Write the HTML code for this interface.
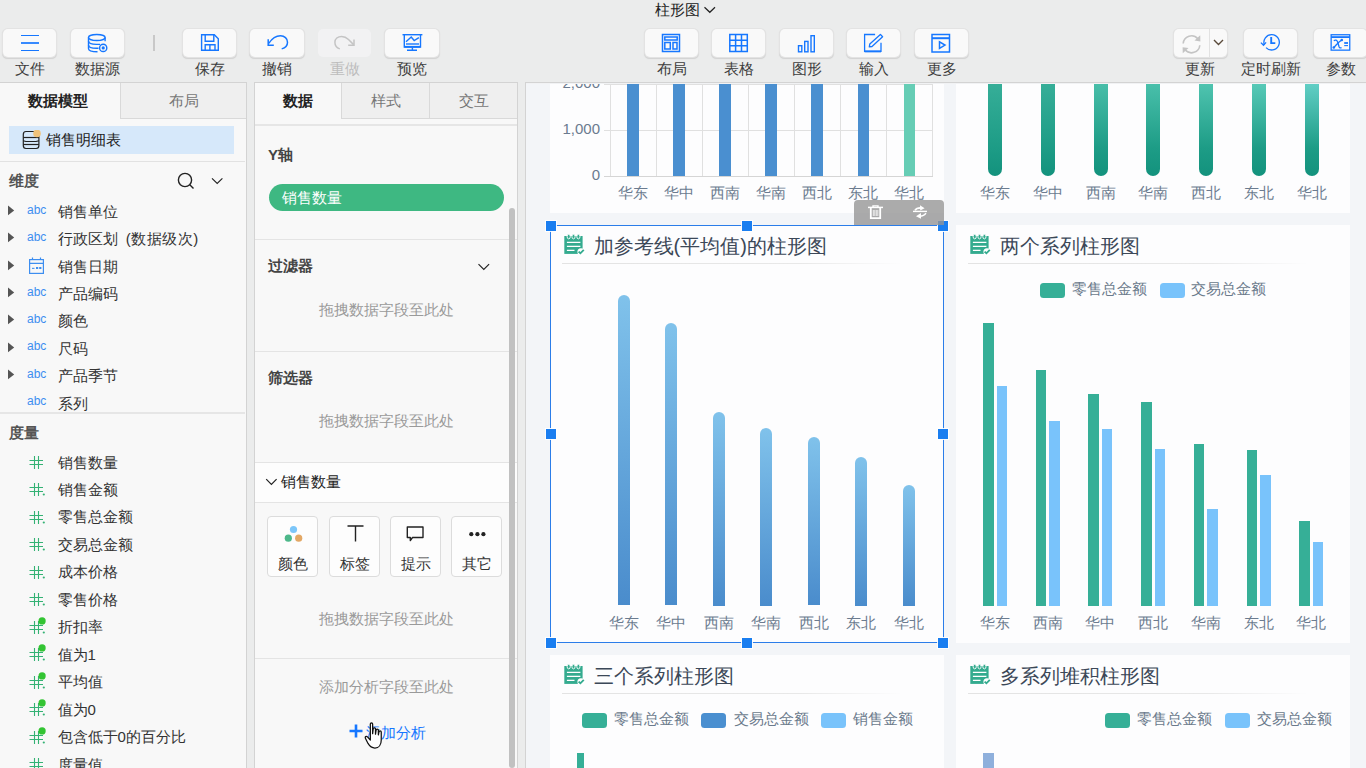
<!DOCTYPE html>
<html><head><meta charset="utf-8">
<style>
*{box-sizing:border-box;margin:0;padding:0}
html,body{width:1366px;height:768px;overflow:hidden;background:#ebecec;font-family:"Liberation Sans",sans-serif;color:#333;position:relative}
.a{position:absolute}
.t{position:absolute;white-space:nowrap;line-height:1}
.btn{position:absolute;top:29px;width:53px;height:27.5px;background:#f9f9f9;border-radius:5px;box-shadow:0 0 0 1px #e3e3e3,0 1px 1px 0.5px #d2d2d2}
.btn svg{position:absolute;left:0;top:0}
.lbl{position:absolute;top:60.5px;font-size:15px;line-height:16px;color:#3d3d3d;text-align:center;width:80px;white-space:nowrap}
</style></head><body>
<div class="t" style="left:654.5px;top:1.5px;font-size:15px;line-height:16px;color:#222">柱形图</div>
<svg class="a" style="left:703px;top:4px" width="14" height="10"><path d="M1.5 3.2 L6.8 8.3 L12 3.2" fill="none" stroke="#222" stroke-width="1.2"/></svg>
<div class="btn" style="left:3px;width:53px;background:#f9f9f9;"><svg style="position:absolute;left:0px;top:0px" width="53" height="28" viewBox="0 0 53 28"><g stroke="#1677ff"><path d="M18 6.5H36M18 21.5H36" stroke-width="1.1"/><path d="M18 14H36" stroke-width="1.7"/></g></svg></div>
<div class="lbl" style="left:-10.5px;color:#3d3d3d">文件</div>
<div class="btn" style="left:71px;width:53px;background:#f9f9f9;"><svg style="position:absolute;left:0px;top:0px" width="53" height="28" viewBox="0 0 53 28"><g fill="none" stroke="#1677ff" stroke-width="1.4"><ellipse cx="25.8" cy="8.5" rx="8.3" ry="3"/><path d="M17.5 8.5V19.5C17.5 21.5 21.5 22.8 26.5 22.8"/><path d="M34.1 8.5V12.3"/><path d="M17.5 12C17.5 14.5 21.5 15.4 25.5 15.4H29"/><path d="M17.5 16C17.5 18.5 21.5 19.3 25.5 19.3H27.5"/><circle cx="32.2" cy="18.9" r="3.6"/></g><circle cx="32.2" cy="18.9" r="1.6" fill="#1677ff"/></svg></div>
<div class="lbl" style="left:57.5px;color:#3d3d3d">数据源</div>
<div class="a" style="left:153px;top:35px;width:2px;height:16px;background:#c8c8c8"></div>
<div class="btn" style="left:183px;width:53px;background:#f9f9f9;"><svg style="position:absolute;left:0px;top:0px" width="53" height="28" viewBox="0 0 53 28"><g fill="none" stroke="#1677ff" stroke-width="1.4"><path d="M18.6 5.7H31.3L35.3 9.7V21.3H18.6Z"/><path d="M22.2 5.7V12.3H30.8V5.7"/><path d="M22.2 21.3V15.8H32V21.3M26.9 15.8V21.3"/></g></svg></div>
<div class="lbl" style="left:169.5px;color:#3d3d3d">保存</div>
<div class="btn" style="left:250px;width:54px;background:#f9f9f9;"><svg style="position:absolute;left:0px;top:0px" width="54" height="28" viewBox="0 0 54 28"><g fill="none" stroke="#1677ff" stroke-width="1.5"><path d="M18.8 14.4C22 9.5 26 6.8 30.5 6.8C34.5 6.8 37.5 9.5 37.5 13.2C37.5 16.5 35 19 31.7 19.9"/><path d="M18.2 10.3V16.2H23.8"/></g></svg></div>
<div class="lbl" style="left:237.0px;color:#3d3d3d">撤销</div>
<div class="btn" style="left:318px;width:53px;background:#f2f2f3;box-shadow:none;"><svg style="position:absolute;left:0px;top:0px" width="53" height="28" viewBox="0 0 53 28"><g fill="none" stroke="#c4c4c4" stroke-width="1.5"><path d="M21.8 19.9C18.5 18.7 16.9 16 16.9 13.2C16.9 9.8 19.8 7.4 23.6 7.4C26.5 7.4 28.5 8.5 30.5 10.5L35.6 15.6"/><path d="M36 10.5V16.2H30.2"/></g></svg></div>
<div class="lbl" style="left:304.5px;color:#bdbdbd">重做</div>
<div class="btn" style="left:385px;width:54px;background:#f9f9f9;"><svg style="position:absolute;left:0px;top:0px" width="54" height="28" viewBox="0 0 54 28"><g fill="none" stroke="#1677ff" stroke-width="1.4"><path d="M17.5 5.7H37.4"/><path d="M19.3 5.7V18H35.5V5.7"/><path d="M19.3 17.8H35.5" stroke-width="1.8"/><path d="M21 12.7L26.2 8L29.2 11.5L33.9 8.6"/><path d="M21 15H34"/><path d="M27.4 18.5V21.2M22 21.2H32"/></g></svg></div>
<div class="lbl" style="left:372.0px;color:#3d3d3d">预览</div>
<div class="btn" style="left:645px;width:53px;background:#f9f9f9;"><svg style="position:absolute;left:0px;top:0px" width="53" height="28" viewBox="0 0 53 28"><g fill="none" stroke="#1677ff" stroke-width="1.5"><rect x="17.5" y="5.5" width="17" height="17"/><rect x="19.8" y="8" width="12.4" height="3"/><rect x="19.8" y="13.5" width="5.5" height="6.5"/><rect x="28" y="13.5" width="4" height="6.5"/></g></svg></div>
<div class="lbl" style="left:631.5px;color:#3d3d3d">布局</div>
<div class="btn" style="left:712px;width:53px;background:#f9f9f9;"><svg style="position:absolute;left:0px;top:0px" width="53" height="28" viewBox="0 0 53 28"><g fill="none" stroke="#1677ff" stroke-width="1.5"><rect x="17.8" y="5.5" width="17.5" height="17"/><path d="M23.6 5.5V22.5M29.5 5.5V22.5M17.8 11.2H35.3M17.8 16.8H35.3"/></g></svg></div>
<div class="lbl" style="left:698.5px;color:#3d3d3d">表格</div>
<div class="btn" style="left:780px;width:53px;background:#f9f9f9;"><svg style="position:absolute;left:0px;top:0px" width="53" height="28" viewBox="0 0 53 28"><g fill="none" stroke="#1677ff" stroke-width="1.4"><rect x="18.5" y="16.7" width="3.3" height="6.1"/><rect x="24.7" y="12.4" width="3.3" height="10.4"/><rect x="31" y="6.7" width="3.3" height="16.1"/></g></svg></div>
<div class="lbl" style="left:766.5px;color:#3d3d3d">图形</div>
<div class="btn" style="left:847px;width:53px;background:#f9f9f9;"><svg style="position:absolute;left:0px;top:0px" width="53" height="28" viewBox="0 0 53 28"><g fill="none" stroke="#1677ff" stroke-width="1.3"><path d="M28.1 5.5H17.6V22.3H34V13.7"/><path d="M17.6 22.4H34" stroke-width="1.9"/><path d="M22.3 17.9L22.8 15.1L33.4 5.4L35.6 7.8L25 17.5Z" stroke-linejoin="round"/></g></svg></div>
<div class="lbl" style="left:833.5px;color:#3d3d3d">输入</div>
<div class="btn" style="left:915px;width:53px;background:#f9f9f9;"><svg style="position:absolute;left:0px;top:0px" width="53" height="28" viewBox="0 0 53 28"><g fill="none" stroke="#1677ff" stroke-width="1.5"><rect x="17" y="5.5" width="17.5" height="17.5"/><path d="M17 9.2H34.5" stroke-width="2"/><path d="M24.5 12.8V19.5L30 16.1Z"/></g></svg></div>
<div class="lbl" style="left:901.5px;color:#3d3d3d">更多</div>
<div class="btn" style="left:1174px;width:53px"><svg style="position:absolute;left:0px;top:0px" width="36" height="28" viewBox="0 0 36 28"><g fill="none" stroke="#c4c4c4" stroke-width="1.6"><path d="M9.2 14.5A8.3 8.3 0 0 1 23.8 9.8"/><path d="M25.8 16.2A8.3 8.3 0 0 1 11.2 20.8"/></g><path d="M26.2 6.3L26.4 12.4L20.5 11.6Z" fill="#c4c4c4"/><path d="M8.8 24.3L8.6 18.2L14.5 19Z" fill="#c4c4c4"/></svg><div class="a" style="left:35px;top:0;width:1px;height:28px;background:#e2e2e2"></div><svg style="position:absolute;left:36px;top:0px" width="18" height="28" viewBox="0 0 18 28"><path d="M4 11L8.5 15.5L13 11" fill="none" stroke="#5a4a3a" stroke-width="1.4"/></svg></div>
<div class="lbl" style="left:1160px">更新</div>
<div class="btn" style="left:1244px;width:53px;background:#f9f9f9;"><svg style="position:absolute;left:0px;top:0px" width="53" height="28" viewBox="0 0 53 28"><g fill="none" stroke="#1677ff" stroke-width="1.3"><path d="M20.36 15.93A7.7 7.7 0 1 1 22.06 18.65"/><path d="M16.9 13.6L19.5 16.2L22.1 13.4"/><path d="M27.2 8V14.1H31.3" stroke-width="1.9"/></g></svg></div>
<div class="lbl" style="left:1230.5px;color:#3d3d3d">定时刷新</div>
<div class="btn" style="left:1314px;width:53px;background:#f9f9f9;"><svg style="position:absolute;left:0px;top:0px" width="53" height="28" viewBox="0 0 53 28"><g fill="none" stroke="#1677ff" stroke-width="1.3"><rect x="17.15" y="5.75" width="18.6" height="15.4"/></g><rect x="17.15" y="7.2" width="18.6" height="1.8" fill="#1677ff"/><g fill="none" stroke="#1677ff" stroke-width="1.3"><path d="M19.8 11.8C21.5 10.5 23 11 23.8 13.5L25 17.5C25.5 19 26.5 19.3 27.5 18.5"/><path d="M19.5 18.7C22 16.5 24.5 12.5 28 10.8"/><path d="M30.2 14H34" stroke-width="1.8"/><path d="M30.2 16.6H34" stroke-width="1.1"/></g><circle cx="27.8" cy="11" r="1.3" fill="#1677ff"/><circle cx="19.8" cy="18.5" r="1.3" fill="#1677ff"/></svg></div>
<div class="lbl" style="left:1300.5px;color:#3d3d3d">参数</div>
<div class="a" style="left:0px;top:83px;width:246px;height:685px;background:#f8f8f8;"></div>
<div class="a" style="left:246px;top:82px;width:1px;height:686px;background:#d3d3d3;"></div>
<div class="a" style="left:120px;top:83px;width:126px;height:36px;background:#efefef;border-left:1px solid #d9d9d9;border-bottom:1px solid #d9d9d9"></div>
<div class="t" style="left:28px;top:92.5px;font-size:15px;line-height:16px;color:#222;font-weight:bold;">数据模型</div>
<div class="t" style="left:169px;top:93px;font-size:15px;line-height:16px;color:#777;font-weight:normal;">布局</div>
<div class="a" style="left:9px;top:126px;width:225px;height:28px;background:#d6e8fa;"></div>
<svg style="position:absolute;left:21px;top:130px" width="22" height="22" viewBox="0 0 22 22"><g fill="none" stroke="#222" stroke-width="1.2"><path d="M15 1.5H5C3 1.5 2.3 2.6 2.3 4.4V15.6C2.3 17.6 3.2 18.5 5 18.5H15.2C17 18.5 17.9 17.6 17.9 15.6V6"/><path d="M2.3 7.5H17.9"/><path d="M2.3 10.9C3.5 10.9 4.5 11.5 5.5 11.5H14.5C15.5 11.5 16.5 10.9 17.9 10.9"/><path d="M2.3 14.5H17.9"/></g><circle cx="16" cy="3.4" r="3.8" fill="#f0c27a"/></svg>
<div class="t" style="left:46px;top:132px;font-size:15px;line-height:16px;color:#222;font-weight:normal;">销售明细表</div>
<div class="a" style="left:0px;top:161px;width:245px;height:1px;background:#e2e2e2;"></div>
<div class="t" style="left:9px;top:173px;font-size:15px;line-height:16px;color:#555;font-weight:bold;">维度</div>
<svg style="position:absolute;left:177px;top:172px" width="20" height="20" viewBox="0 0 20 20"><g fill="none" stroke="#222" stroke-width="1.4"><circle cx="8" cy="8" r="6.6"/><path d="M12.8 12.8L16.5 16.5"/></g></svg>
<svg style="position:absolute;left:210px;top:176px" width="14" height="10" viewBox="0 0 14 10"><path d="M2 2.4L7.2 7.4L12.4 2.4" fill="none" stroke="#222" stroke-width="1.15"/></svg>
<svg style="position:absolute;left:7px;top:205px" width="9" height="12" viewBox="0 0 9 12"><path d="M1 0.5L7.2 5.4L1 10.3Z" fill="#555"/></svg>
<div class="t" style="left:27px;top:201.5px;font-size:12px;line-height:16px;color:#3d8ef0">abc</div>
<div class="t" style="left:57.5px;top:204.0px;font-size:15px;line-height:16px;color:#333;font-weight:normal;">销售单位</div>
<svg style="position:absolute;left:7px;top:232px" width="9" height="12" viewBox="0 0 9 12"><path d="M1 0.5L7.2 5.4L1 10.3Z" fill="#555"/></svg>
<div class="t" style="left:27px;top:228.5px;font-size:12px;line-height:16px;color:#3d8ef0">abc</div>
<div class="t" style="left:57.5px;top:231.0px;font-size:15px;line-height:16px;color:#333;font-weight:normal;">行政区划&nbsp;<span style="margin-left:4px;letter-spacing:0.5px">(数据级次)</span></div>
<svg style="position:absolute;left:7px;top:259.5px" width="9" height="12" viewBox="0 0 9 12"><path d="M1 0.5L7.2 5.4L1 10.3Z" fill="#555"/></svg>
<svg style="position:absolute;left:25.5px;top:257.0px" width="20" height="20" viewBox="0 0 20 20"><g fill="none" stroke="#3d8ef0" stroke-width="1.2"><rect x="3.6" y="2.6" width="13.8" height="13.8"/><path d="M3.6 6.3H17.4M6.5 0.5V3M14.5 0.5V3"/></g><g fill="#3d8ef0"><rect x="6" y="10.8" width="2.5" height="1.1"/><rect x="10" y="10" width="2.2" height="2"/><rect x="13.2" y="10" width="2.2" height="2"/></g></svg>
<div class="t" style="left:57.5px;top:258.5px;font-size:15px;line-height:16px;color:#333;font-weight:normal;">销售日期</div>
<svg style="position:absolute;left:7px;top:287px" width="9" height="12" viewBox="0 0 9 12"><path d="M1 0.5L7.2 5.4L1 10.3Z" fill="#555"/></svg>
<div class="t" style="left:27px;top:283.5px;font-size:12px;line-height:16px;color:#3d8ef0">abc</div>
<div class="t" style="left:57.5px;top:286.0px;font-size:15px;line-height:16px;color:#333;font-weight:normal;">产品编码</div>
<svg style="position:absolute;left:7px;top:314px" width="9" height="12" viewBox="0 0 9 12"><path d="M1 0.5L7.2 5.4L1 10.3Z" fill="#555"/></svg>
<div class="t" style="left:27px;top:310.5px;font-size:12px;line-height:16px;color:#3d8ef0">abc</div>
<div class="t" style="left:57.5px;top:313.0px;font-size:15px;line-height:16px;color:#333;font-weight:normal;">颜色</div>
<svg style="position:absolute;left:7px;top:341.5px" width="9" height="12" viewBox="0 0 9 12"><path d="M1 0.5L7.2 5.4L1 10.3Z" fill="#555"/></svg>
<div class="t" style="left:27px;top:338.0px;font-size:12px;line-height:16px;color:#3d8ef0">abc</div>
<div class="t" style="left:57.5px;top:340.5px;font-size:15px;line-height:16px;color:#333;font-weight:normal;">尺码</div>
<svg style="position:absolute;left:7px;top:369px" width="9" height="12" viewBox="0 0 9 12"><path d="M1 0.5L7.2 5.4L1 10.3Z" fill="#555"/></svg>
<div class="t" style="left:27px;top:365.5px;font-size:12px;line-height:16px;color:#3d8ef0">abc</div>
<div class="t" style="left:57.5px;top:368.0px;font-size:15px;line-height:16px;color:#333;font-weight:normal;">产品季节</div>
<div class="t" style="left:27px;top:393.0px;font-size:12px;line-height:16px;color:#3d8ef0">abc</div>
<div class="t" style="left:57.5px;top:395.5px;font-size:15px;line-height:16px;color:#333;font-weight:normal;">系列</div>
<div class="a" style="left:0px;top:412px;width:245px;height:2px;background:#e6e6e6;"></div>
<div class="t" style="left:9px;top:424.5px;font-size:15px;line-height:16px;color:#555;font-weight:bold;">度量</div>
<svg style="position:absolute;left:29px;top:451px" width="19" height="19" viewBox="0 0 19 19"><g stroke="#34b274" stroke-width="1.1" fill="none"><path d="M5.5 5V18M9.5 5V18M0.5 9.5H14M0.5 13.5H14"/></g></svg>
<div class="t" style="left:57.5px;top:454.5px;font-size:15px;line-height:16px;color:#333;font-weight:normal;">销售数量</div>
<svg style="position:absolute;left:29px;top:478px" width="19" height="19" viewBox="0 0 19 19"><g stroke="#34b274" stroke-width="1.1" fill="none"><path d="M5.5 5V18M9.5 5V18M0.5 9.5H14M0.5 13.5H14"/></g><circle cx="14.8" cy="16.5" r="1.1" fill="#34b274"/></svg>
<div class="t" style="left:57.5px;top:481.5px;font-size:15px;line-height:16px;color:#333;font-weight:normal;">销售金额</div>
<svg style="position:absolute;left:29px;top:506px" width="19" height="19" viewBox="0 0 19 19"><g stroke="#34b274" stroke-width="1.1" fill="none"><path d="M5.5 5V18M9.5 5V18M0.5 9.5H14M0.5 13.5H14"/></g><circle cx="14.8" cy="16.5" r="1.1" fill="#34b274"/></svg>
<div class="t" style="left:57.5px;top:509.0px;font-size:15px;line-height:16px;color:#333;font-weight:normal;">零售总金额</div>
<svg style="position:absolute;left:29px;top:533px" width="19" height="19" viewBox="0 0 19 19"><g stroke="#34b274" stroke-width="1.1" fill="none"><path d="M5.5 5V18M9.5 5V18M0.5 9.5H14M0.5 13.5H14"/></g><circle cx="14.8" cy="16.5" r="1.1" fill="#34b274"/></svg>
<div class="t" style="left:57.5px;top:536.5px;font-size:15px;line-height:16px;color:#333;font-weight:normal;">交易总金额</div>
<svg style="position:absolute;left:29px;top:561px" width="19" height="19" viewBox="0 0 19 19"><g stroke="#34b274" stroke-width="1.1" fill="none"><path d="M5.5 5V18M9.5 5V18M0.5 9.5H14M0.5 13.5H14"/></g><circle cx="14.8" cy="16.5" r="1.1" fill="#34b274"/></svg>
<div class="t" style="left:57.5px;top:564.0px;font-size:15px;line-height:16px;color:#333;font-weight:normal;">成本价格</div>
<svg style="position:absolute;left:29px;top:588px" width="19" height="19" viewBox="0 0 19 19"><g stroke="#34b274" stroke-width="1.1" fill="none"><path d="M5.5 5V18M9.5 5V18M0.5 9.5H14M0.5 13.5H14"/></g><circle cx="14.8" cy="16.5" r="1.1" fill="#34b274"/></svg>
<div class="t" style="left:57.5px;top:591.5px;font-size:15px;line-height:16px;color:#333;font-weight:normal;">零售价格</div>
<svg style="position:absolute;left:29px;top:616px" width="19" height="19" viewBox="0 0 19 19"><g stroke="#34b274" stroke-width="1.1" fill="none"><path d="M5.5 5V18M9.5 5V18M0.5 9.5H14M0.5 13.5H14"/></g><circle cx="14.8" cy="16.5" r="1.1" fill="#34b274"/><circle cx="13.1" cy="4.9" r="3.6" fill="#33c433"/></svg>
<div class="t" style="left:57.5px;top:619.0px;font-size:15px;line-height:16px;color:#333;font-weight:normal;">折扣率</div>
<svg style="position:absolute;left:29px;top:643px" width="19" height="19" viewBox="0 0 19 19"><g stroke="#34b274" stroke-width="1.1" fill="none"><path d="M5.5 5V18M9.5 5V18M0.5 9.5H14M0.5 13.5H14"/></g><circle cx="14.8" cy="16.5" r="1.1" fill="#34b274"/><circle cx="13.1" cy="4.9" r="3.6" fill="#33c433"/></svg>
<div class="t" style="left:57.5px;top:646.5px;font-size:15px;line-height:16px;color:#333;font-weight:normal;">值为1</div>
<svg style="position:absolute;left:29px;top:671px" width="19" height="19" viewBox="0 0 19 19"><g stroke="#34b274" stroke-width="1.1" fill="none"><path d="M5.5 5V18M9.5 5V18M0.5 9.5H14M0.5 13.5H14"/></g><circle cx="14.8" cy="16.5" r="1.1" fill="#34b274"/><circle cx="13.1" cy="4.9" r="3.6" fill="#33c433"/></svg>
<div class="t" style="left:57.5px;top:674.0px;font-size:15px;line-height:16px;color:#333;font-weight:normal;">平均值</div>
<svg style="position:absolute;left:29px;top:698px" width="19" height="19" viewBox="0 0 19 19"><g stroke="#34b274" stroke-width="1.1" fill="none"><path d="M5.5 5V18M9.5 5V18M0.5 9.5H14M0.5 13.5H14"/></g><circle cx="14.8" cy="16.5" r="1.1" fill="#34b274"/><circle cx="13.1" cy="4.9" r="3.6" fill="#33c433"/></svg>
<div class="t" style="left:57.5px;top:701.5px;font-size:15px;line-height:16px;color:#333;font-weight:normal;">值为0</div>
<svg style="position:absolute;left:29px;top:726px" width="19" height="19" viewBox="0 0 19 19"><g stroke="#34b274" stroke-width="1.1" fill="none"><path d="M5.5 5V18M9.5 5V18M0.5 9.5H14M0.5 13.5H14"/></g><circle cx="14.8" cy="16.5" r="1.1" fill="#34b274"/><circle cx="13.1" cy="4.9" r="3.6" fill="#33c433"/></svg>
<div class="t" style="left:57.5px;top:729.0px;font-size:15px;line-height:16px;color:#333;font-weight:normal;">包含低于0的百分比</div>
<svg style="position:absolute;left:29px;top:753px" width="19" height="19" viewBox="0 0 19 19"><g stroke="#34b274" stroke-width="1.1" fill="none"><path d="M5.5 5V18M9.5 5V18M0.5 9.5H14M0.5 13.5H14"/></g><circle cx="14.8" cy="16.5" r="1.1" fill="#34b274"/></svg>
<div class="t" style="left:57.5px;top:756.5px;font-size:15px;line-height:16px;color:#333;font-weight:normal;">度量值</div>
<div class="a" style="left:254px;top:82px;width:1px;height:686px;background:#d3d3d3;"></div>
<div class="a" style="left:255px;top:83px;width:262px;height:685px;background:#f8f8f8;"></div>
<div class="a" style="left:517px;top:82px;width:1px;height:686px;background:#d3d3d3;"></div>
<div class="a" style="left:341px;top:83px;width:88px;height:36px;background:#efefef;border-left:1px solid #d9d9d9;border-bottom:1px solid #d9d9d9"></div>
<div class="a" style="left:429px;top:83px;width:88px;height:36px;background:#efefef;border-left:1px solid #d9d9d9;border-bottom:1px solid #d9d9d9"></div>
<div class="t" style="left:283px;top:92.5px;font-size:15px;line-height:16px;color:#222;font-weight:bold;">数据</div>
<div class="t" style="left:371px;top:93px;font-size:15px;line-height:16px;color:#777;font-weight:normal;">样式</div>
<div class="t" style="left:459px;top:93px;font-size:15px;line-height:16px;color:#777;font-weight:normal;">交互</div>
<div class="a" style="left:255px;top:124px;width:262px;height:2px;background:#e6e6e6;"></div>
<div class="t" style="left:268px;top:147px;font-size:15px;line-height:16px;color:#444;font-weight:bold;">Y轴</div>
<div class="a" style="left:269px;top:184px;width:235px;height:27px;background:#3eb882;border-radius:14px"></div>
<div class="t" style="left:282px;top:190px;font-size:15px;line-height:16px;color:#fff;font-weight:normal;">销售数量</div>
<div class="a" style="left:255px;top:239px;width:262px;height:1px;background:#e4e4e4;"></div>
<div class="t" style="left:267.5px;top:258px;font-size:15px;line-height:16px;color:#444;font-weight:bold;">过滤器</div>
<svg style="position:absolute;left:476.5px;top:262px" width="14" height="10" viewBox="0 0 14 10"><path d="M1.5 2.2L6.8 7.5L12.1 2.2" fill="none" stroke="#222" stroke-width="1.15"/></svg>
<div class="t" style="left:318.5px;top:302px;font-size:15px;line-height:16px;color:#9a9a9a;font-weight:normal;">拖拽数据字段至此处</div>
<div class="a" style="left:255px;top:351px;width:262px;height:1px;background:#e4e4e4;"></div>
<div class="t" style="left:267.5px;top:370px;font-size:15px;line-height:16px;color:#444;font-weight:bold;">筛选器</div>
<div class="t" style="left:318.5px;top:413px;font-size:15px;line-height:16px;color:#9a9a9a;font-weight:normal;">拖拽数据字段至此处</div>
<div class="a" style="left:255px;top:463px;width:262px;height:39px;background:#fdfdfd;"></div>
<div class="a" style="left:255px;top:462px;width:262px;height:1px;background:#e4e4e4;"></div>
<svg style="position:absolute;left:265px;top:476.5px" width="14" height="10" viewBox="0 0 14 10"><path d="M1.2 2.2L6.4 7.4L11.6 2.2" fill="none" stroke="#222" stroke-width="1.2"/></svg>
<div class="t" style="left:280.5px;top:474px;font-size:15px;line-height:16px;color:#222;font-weight:normal;">销售数量</div>
<div class="a" style="left:255px;top:501.5px;width:262px;height:1px;background:#e4e4e4;"></div>
<div class="a" style="left:267px;top:516px;width:51px;height:61px;background:#fdfdfd;border:1px solid #dcdcdc;border-radius:4px"><svg style="position:absolute;left:0px;top:0px" width="51" height="40" viewBox="0 0 51 40"><circle cx="25.5" cy="12.5" r="3.6" fill="#7cc6f9"/><circle cx="20.3" cy="21.2" r="3.6" fill="#4db88a"/><circle cx="30.7" cy="21.2" r="3.6" fill="#e3a865"/></svg></div>
<div class="t" style="left:277.5px;top:556px;font-size:15px;line-height:16px;color:#333;font-weight:normal;">颜色</div>
<div class="a" style="left:329px;top:516px;width:51px;height:61px;background:#fdfdfd;border:1px solid #dcdcdc;border-radius:4px"><svg style="position:absolute;left:0px;top:0px" width="51" height="40" viewBox="0 0 51 40"><path d="M17.5 9H33.5M25.5 9V24.5" stroke="#222" stroke-width="1.4" fill="none"/></svg></div>
<div class="t" style="left:339.5px;top:556px;font-size:15px;line-height:16px;color:#333;font-weight:normal;">标签</div>
<div class="a" style="left:390px;top:516px;width:51px;height:61px;background:#fdfdfd;border:1px solid #dcdcdc;border-radius:4px"><svg style="position:absolute;left:0px;top:0px" width="51" height="40" viewBox="0 0 51 40"><path d="M16.3 10H32V20.5H21.5L19.3 23.6V20.5H16.3Z" stroke="#222" stroke-width="1.4" fill="none" stroke-linejoin="round"/></svg></div>
<div class="t" style="left:400.5px;top:556px;font-size:15px;line-height:16px;color:#333;font-weight:normal;">提示</div>
<div class="a" style="left:451px;top:516px;width:51px;height:61px;background:#fdfdfd;border:1px solid #dcdcdc;border-radius:4px"><svg style="position:absolute;left:0px;top:0px" width="51" height="40" viewBox="0 0 51 40"><circle cx="19.3" cy="17.2" r="2.1" fill="#222"/><circle cx="25.4" cy="17.2" r="2.1" fill="#222"/><circle cx="31.4" cy="17.2" r="2.1" fill="#222"/></svg></div>
<div class="t" style="left:461.5px;top:556px;font-size:15px;line-height:16px;color:#333;font-weight:normal;">其它</div>
<div class="t" style="left:318.5px;top:610.5px;font-size:15px;line-height:16px;color:#9a9a9a;font-weight:normal;">拖拽数据字段至此处</div>
<div class="a" style="left:255px;top:658px;width:262px;height:1px;background:#e4e4e4;"></div>
<div class="t" style="left:318.5px;top:678.5px;font-size:15px;line-height:16px;color:#9a9a9a;font-weight:normal;">添加分析字段至此处</div>
<svg style="position:absolute;left:347.5px;top:722.5px" width="16" height="16" viewBox="0 0 16 16"><path d="M8 1.5V14.5M1.5 8H14.5" stroke="#1677ff" stroke-width="2.6"/></svg>
<div class="t" style="left:366px;top:725px;font-size:15px;line-height:16px;color:#1677ff;font-weight:normal;">添加分析</div>
<div class="a" style="left:509px;top:208px;width:6px;height:560px;background:#c1c1c1;border-radius:3px"></div>
<svg style="position:absolute;left:364px;top:720.5px" width="23" height="30" viewBox="0 0 23 30"><g transform="scale(1.15)"><path d="M5.5 2.5C5.5 1.3 7.5 1.3 7.5 2.5V11L8 6.8C8 5.6 10 5.6 10 6.8V11.5L10.5 8C10.5 6.8 12.5 6.8 12.5 8V12L13 9.5C13 8.3 15 8.3 15 9.5V16.5C15 20.5 13 23.5 9.5 23.5C6.5 23.5 5 22 3.5 19.5L1.2 15C0.6 13.8 2 12.8 3 13.8L5.5 16.5Z" fill="#fff" stroke="#111" stroke-width="1.1" stroke-linejoin="round"/></g></svg>
<div class="a" style="left:518px;top:83px;width:7px;height:685px;background:#ebecec;"></div>
<div class="a" style="left:525px;top:83px;width:841px;height:685px;background:#f3f5f8;"></div>
<div class="a" style="left:525px;top:82px;width:1px;height:686px;background:#d3d3d3;"></div>
<div class="a" style="left:526px;top:83px;width:840px;height:685px;overflow:hidden">
<div class="a" style="left:24px;top:-23px;width:394px;height:152.5px;background:#fdfdfe;"></div>
<div class="a" style="left:430px;top:-23px;width:394px;height:152.5px;background:#fdfdfe;"></div>
<div class="a" style="left:24px;top:142px;width:394px;height:417px;background:#fdfdfe;"></div>
<div class="a" style="left:430px;top:142px;width:394px;height:418px;background:#fdfdfe;"></div>
<div class="a" style="left:24px;top:572px;width:394px;height:120px;background:#fdfdfe;"></div>
<div class="a" style="left:430px;top:572px;width:394px;height:120px;background:#fdfdfe;"></div>
<div class="t" style="left:24px;top:-8.5px;width:50px;text-align:right;font-size:15px;line-height:16px;color:#6b7b8f">2,000</div>
<div class="t" style="left:24px;top:37.5px;width:50px;text-align:right;font-size:15px;line-height:16px;color:#6b7b8f">1,000</div>
<div class="t" style="left:24px;top:84px;width:50px;text-align:right;font-size:15px;line-height:16px;color:#6b7b8f">0</div>
<div class="a" style="left:78px;top:1px;width:329px;height:1px;background:#e0e0e0;"></div>
<div class="a" style="left:78px;top:47px;width:329px;height:1px;background:#e0e0e0;"></div>
<div class="a" style="left:84px;top:1px;width:1px;height:92px;background:#e0e0e0;"></div>
<div class="a" style="left:130px;top:1px;width:1px;height:92px;background:#e0e0e0;"></div>
<div class="a" style="left:176px;top:1px;width:1px;height:92px;background:#e0e0e0;"></div>
<div class="a" style="left:222px;top:1px;width:1px;height:92px;background:#e0e0e0;"></div>
<div class="a" style="left:268px;top:1px;width:1px;height:92px;background:#e0e0e0;"></div>
<div class="a" style="left:314px;top:1px;width:1px;height:92px;background:#e0e0e0;"></div>
<div class="a" style="left:360px;top:1px;width:1px;height:92px;background:#e0e0e0;"></div>
<div class="a" style="left:406px;top:1px;width:1px;height:92px;background:#e0e0e0;"></div>
<div class="a" style="left:101.25px;top:-23px;width:11.5px;height:116px;background:#4a8fd0;"></div>
<div class="t" style="left:67.0px;top:102px;width:80px;text-align:center;font-size:15px;line-height:16px;color:#6b7b8f">华东</div>
<div class="a" style="left:147.29999999999995px;top:-23px;width:11.5px;height:116px;background:#4a8fd0;"></div>
<div class="t" style="left:113.04999999999995px;top:102px;width:80px;text-align:center;font-size:15px;line-height:16px;color:#6b7b8f">华中</div>
<div class="a" style="left:193.35000000000002px;top:-23px;width:11.5px;height:116px;background:#4a8fd0;"></div>
<div class="t" style="left:159.10000000000002px;top:102px;width:80px;text-align:center;font-size:15px;line-height:16px;color:#6b7b8f">西南</div>
<div class="a" style="left:239.39999999999998px;top:-23px;width:11.5px;height:116px;background:#4a8fd0;"></div>
<div class="t" style="left:205.14999999999998px;top:102px;width:80px;text-align:center;font-size:15px;line-height:16px;color:#6b7b8f">华南</div>
<div class="a" style="left:285.45000000000005px;top:-23px;width:11.5px;height:116px;background:#4a8fd0;"></div>
<div class="t" style="left:251.20000000000005px;top:102px;width:80px;text-align:center;font-size:15px;line-height:16px;color:#6b7b8f">西北</div>
<div class="a" style="left:331.5px;top:-23px;width:11.5px;height:116px;background:#4a8fd0;"></div>
<div class="t" style="left:297.25px;top:102px;width:80px;text-align:center;font-size:15px;line-height:16px;color:#6b7b8f">东北</div>
<div class="a" style="left:377.54999999999995px;top:-23px;width:11.5px;height:116px;background:#66cdb5;"></div>
<div class="t" style="left:343.29999999999995px;top:102px;width:80px;text-align:center;font-size:15px;line-height:16px;color:#6b7b8f">华北</div>
<div class="a" style="left:78px;top:93px;width:329px;height:1px;background:#d5d5d5;"></div>
<div class="a" style="left:462.0px;top:0px;width:14px;height:93px;background:linear-gradient(#36ae98,#1d9c86 70%,#13927d);border-radius:0 0 7px 7px"></div>
<div class="t" style="left:429.0px;top:102px;width:80px;text-align:center;font-size:15px;line-height:16px;color:#6b7b8f">华东</div>
<div class="a" style="left:514.8px;top:0px;width:14px;height:93px;background:linear-gradient(#36ae98,#1d9c86 70%,#13927d);border-radius:0 0 7px 7px"></div>
<div class="t" style="left:481.79999999999995px;top:102px;width:80px;text-align:center;font-size:15px;line-height:16px;color:#6b7b8f">华中</div>
<div class="a" style="left:567.5999999999999px;top:0px;width:14px;height:93px;background:linear-gradient(#48bea9,#1d9c86 70%,#13927d);border-radius:0 0 7px 7px"></div>
<div class="t" style="left:534.5999999999999px;top:102px;width:80px;text-align:center;font-size:15px;line-height:16px;color:#6b7b8f">西南</div>
<div class="a" style="left:620.4000000000001px;top:0px;width:14px;height:93px;background:linear-gradient(#4ac0ab,#1d9c86 70%,#13927d);border-radius:0 0 7px 7px"></div>
<div class="t" style="left:587.4000000000001px;top:102px;width:80px;text-align:center;font-size:15px;line-height:16px;color:#6b7b8f">华南</div>
<div class="a" style="left:673.2px;top:0px;width:14px;height:93px;background:linear-gradient(#50c4b0,#1d9c86 70%,#13927d);border-radius:0 0 7px 7px"></div>
<div class="t" style="left:640.2px;top:102px;width:80px;text-align:center;font-size:15px;line-height:16px;color:#6b7b8f">西北</div>
<div class="a" style="left:726.0px;top:0px;width:14px;height:93px;background:linear-gradient(#58cab8,#1d9c86 70%,#13927d);border-radius:0 0 7px 7px"></div>
<div class="t" style="left:693.0px;top:102px;width:80px;text-align:center;font-size:15px;line-height:16px;color:#6b7b8f">东北</div>
<div class="a" style="left:778.8px;top:0px;width:14px;height:93px;background:linear-gradient(#62cfc6,#1d9c86 70%,#13927d);border-radius:0 0 7px 7px"></div>
<div class="t" style="left:745.8px;top:102px;width:80px;text-align:center;font-size:15px;line-height:16px;color:#6b7b8f">华北</div>
<svg style="position:absolute;left:37.5px;top:151px" width="22" height="22" viewBox="0 0 22 22"><rect x="0.3" y="2" width="18.3" height="17.9" fill="#34ab8f"/><g fill="#34ab8f" stroke="#fff" stroke-width="0.9"><ellipse cx="4.7" cy="2.6" rx="1.6" ry="2.3"/><ellipse cx="9.5" cy="2.6" rx="1.6" ry="2.3"/><ellipse cx="14.4" cy="2.6" rx="1.6" ry="2.3"/></g><g stroke="#fff" stroke-width="1.3"><path d="M2.9 8.4H16.4M2.9 12.4H16.4M2.9 16.4H10.5"/></g><circle cx="17" cy="17.8" r="3.6" fill="#fff"/><path d="M14.6 17.6L16.4 19.3L19.8 15.9" stroke="#34ab8f" stroke-width="1.9" fill="none"/></svg>
<div class="t" style="left:67.5px;top:152.5px;font-size:20px;line-height:20px;color:#3c4858">加参考线(平均值)的柱形图</div>
<div class="a" style="left:36.0px;top:180px;width:340px;height:1px;background:linear-gradient(90deg,#e3e3e3 0%,#e8e8e8 70%,rgba(240,240,240,0) 100%)"></div>
<svg style="position:absolute;left:443.5px;top:151px" width="22" height="22" viewBox="0 0 22 22"><rect x="0.3" y="2" width="18.3" height="17.9" fill="#34ab8f"/><g fill="#34ab8f" stroke="#fff" stroke-width="0.9"><ellipse cx="4.7" cy="2.6" rx="1.6" ry="2.3"/><ellipse cx="9.5" cy="2.6" rx="1.6" ry="2.3"/><ellipse cx="14.4" cy="2.6" rx="1.6" ry="2.3"/></g><g stroke="#fff" stroke-width="1.3"><path d="M2.9 8.4H16.4M2.9 12.4H16.4M2.9 16.4H10.5"/></g><circle cx="17" cy="17.8" r="3.6" fill="#fff"/><path d="M14.6 17.6L16.4 19.3L19.8 15.9" stroke="#34ab8f" stroke-width="1.9" fill="none"/></svg>
<div class="t" style="left:473.5px;top:152.5px;font-size:20px;line-height:20px;color:#3c4858">两个系列柱形图</div>
<div class="a" style="left:442.0px;top:180px;width:340px;height:1px;background:linear-gradient(90deg,#e3e3e3 0%,#e8e8e8 70%,rgba(240,240,240,0) 100%)"></div>
<svg style="position:absolute;left:37.5px;top:581px" width="22" height="22" viewBox="0 0 22 22"><rect x="0.3" y="2" width="18.3" height="17.9" fill="#34ab8f"/><g fill="#34ab8f" stroke="#fff" stroke-width="0.9"><ellipse cx="4.7" cy="2.6" rx="1.6" ry="2.3"/><ellipse cx="9.5" cy="2.6" rx="1.6" ry="2.3"/><ellipse cx="14.4" cy="2.6" rx="1.6" ry="2.3"/></g><g stroke="#fff" stroke-width="1.3"><path d="M2.9 8.4H16.4M2.9 12.4H16.4M2.9 16.4H10.5"/></g><circle cx="17" cy="17.8" r="3.6" fill="#fff"/><path d="M14.6 17.6L16.4 19.3L19.8 15.9" stroke="#34ab8f" stroke-width="1.9" fill="none"/></svg>
<div class="t" style="left:67.5px;top:582.5px;font-size:20px;line-height:20px;color:#3c4858">三个系列柱形图</div>
<div class="a" style="left:36.0px;top:610px;width:340px;height:1px;background:linear-gradient(90deg,#e3e3e3 0%,#e8e8e8 70%,rgba(240,240,240,0) 100%)"></div>
<svg style="position:absolute;left:443.5px;top:581px" width="22" height="22" viewBox="0 0 22 22"><rect x="0.3" y="2" width="18.3" height="17.9" fill="#34ab8f"/><g fill="#34ab8f" stroke="#fff" stroke-width="0.9"><ellipse cx="4.7" cy="2.6" rx="1.6" ry="2.3"/><ellipse cx="9.5" cy="2.6" rx="1.6" ry="2.3"/><ellipse cx="14.4" cy="2.6" rx="1.6" ry="2.3"/></g><g stroke="#fff" stroke-width="1.3"><path d="M2.9 8.4H16.4M2.9 12.4H16.4M2.9 16.4H10.5"/></g><circle cx="17" cy="17.8" r="3.6" fill="#fff"/><path d="M14.6 17.6L16.4 19.3L19.8 15.9" stroke="#34ab8f" stroke-width="1.9" fill="none"/></svg>
<div class="t" style="left:473.5px;top:582.5px;font-size:20px;line-height:20px;color:#3c4858">多系列堆积柱形图</div>
<div class="a" style="left:442.0px;top:610px;width:340px;height:1px;background:linear-gradient(90deg,#e3e3e3 0%,#e8e8e8 70%,rgba(240,240,240,0) 100%)"></div>
<div class="a" style="left:92.0px;top:211.7px;width:12px;height:310.8px;background:linear-gradient(#80c2eb,#4a8ccc);border-radius:6px 6px 0 0"></div>
<div class="t" style="left:58.0px;top:531.5px;width:80px;text-align:center;font-size:15px;line-height:16px;color:#6b7b8f">华东</div>
<div class="a" style="left:139.41999999999996px;top:239.7px;width:12px;height:282.8px;background:linear-gradient(#80c2eb,#4a8ccc);border-radius:6px 6px 0 0"></div>
<div class="t" style="left:105.41999999999996px;top:531.5px;width:80px;text-align:center;font-size:15px;line-height:16px;color:#6b7b8f">华中</div>
<div class="a" style="left:186.84000000000003px;top:328.5px;width:12px;height:194.0px;background:linear-gradient(#80c2eb,#4a8ccc);border-radius:6px 6px 0 0"></div>
<div class="t" style="left:152.84000000000003px;top:531.5px;width:80px;text-align:center;font-size:15px;line-height:16px;color:#6b7b8f">西南</div>
<div class="a" style="left:234.26px;top:344.5px;width:12px;height:178.0px;background:linear-gradient(#80c2eb,#4a8ccc);border-radius:6px 6px 0 0"></div>
<div class="t" style="left:200.26px;top:531.5px;width:80px;text-align:center;font-size:15px;line-height:16px;color:#6b7b8f">华南</div>
<div class="a" style="left:281.68000000000006px;top:353.8px;width:12px;height:168.7px;background:linear-gradient(#80c2eb,#4a8ccc);border-radius:6px 6px 0 0"></div>
<div class="t" style="left:247.68000000000006px;top:531.5px;width:80px;text-align:center;font-size:15px;line-height:16px;color:#6b7b8f">西北</div>
<div class="a" style="left:329.1px;top:374px;width:12px;height:148.5px;background:linear-gradient(#80c2eb,#4a8ccc);border-radius:6px 6px 0 0"></div>
<div class="t" style="left:295.1px;top:531.5px;width:80px;text-align:center;font-size:15px;line-height:16px;color:#6b7b8f">东北</div>
<div class="a" style="left:376.52px;top:401.5px;width:12px;height:121.0px;background:linear-gradient(#80c2eb,#4a8ccc);border-radius:6px 6px 0 0"></div>
<div class="t" style="left:342.52px;top:531.5px;width:80px;text-align:center;font-size:15px;line-height:16px;color:#6b7b8f">华北</div>
<div class="a" style="left:514px;top:199.5px;width:25px;height:15px;background:#36af97;border-radius:3.5px"></div>
<div class="t" style="left:546px;top:197.5px;font-size:15px;line-height:16px;color:#6b7a8c;">零售总金额</div>
<div class="a" style="left:634px;top:199.5px;width:25px;height:15px;background:#79c3fb;border-radius:3.5px"></div>
<div class="t" style="left:665px;top:197.5px;font-size:15px;line-height:16px;color:#6b7a8c;">交易总金额</div>
<div class="a" style="left:457.0px;top:240px;width:10.5px;height:282.5px;background:#36af97;"></div>
<div class="a" style="left:470.5px;top:303px;width:10.5px;height:219.5px;background:#79c3fb;"></div>
<div class="t" style="left:429.0px;top:531.5px;width:80px;text-align:center;font-size:15px;line-height:16px;color:#6b7b8f">华东</div>
<div class="a" style="left:509.70000000000005px;top:287px;width:10.5px;height:235.5px;background:#36af97;"></div>
<div class="a" style="left:523.2px;top:338px;width:10.5px;height:184.5px;background:#79c3fb;"></div>
<div class="t" style="left:481.70000000000005px;top:531.5px;width:80px;text-align:center;font-size:15px;line-height:16px;color:#6b7b8f">西南</div>
<div class="a" style="left:562.4000000000001px;top:311px;width:10.5px;height:211.5px;background:#36af97;"></div>
<div class="a" style="left:575.9000000000001px;top:346px;width:10.5px;height:176.5px;background:#79c3fb;"></div>
<div class="t" style="left:534.4000000000001px;top:531.5px;width:80px;text-align:center;font-size:15px;line-height:16px;color:#6b7b8f">华中</div>
<div class="a" style="left:615.0999999999999px;top:318.5px;width:10.5px;height:204.0px;background:#36af97;"></div>
<div class="a" style="left:628.5999999999999px;top:365.5px;width:10.5px;height:157.0px;background:#79c3fb;"></div>
<div class="t" style="left:587.0999999999999px;top:531.5px;width:80px;text-align:center;font-size:15px;line-height:16px;color:#6b7b8f">西北</div>
<div class="a" style="left:667.8px;top:361px;width:10.5px;height:161.5px;background:#36af97;"></div>
<div class="a" style="left:681.3px;top:426px;width:10.5px;height:96.5px;background:#79c3fb;"></div>
<div class="t" style="left:639.8px;top:531.5px;width:80px;text-align:center;font-size:15px;line-height:16px;color:#6b7b8f">华南</div>
<div class="a" style="left:720.5px;top:366.5px;width:10.5px;height:156.0px;background:#36af97;"></div>
<div class="a" style="left:734.0px;top:392px;width:10.5px;height:130.5px;background:#79c3fb;"></div>
<div class="t" style="left:692.5px;top:531.5px;width:80px;text-align:center;font-size:15px;line-height:16px;color:#6b7b8f">东北</div>
<div class="a" style="left:773.2px;top:438px;width:10.5px;height:84.5px;background:#36af97;"></div>
<div class="a" style="left:786.7px;top:458.5px;width:10.5px;height:64.0px;background:#79c3fb;"></div>
<div class="t" style="left:745.2px;top:531.5px;width:80px;text-align:center;font-size:15px;line-height:16px;color:#6b7b8f">华北</div>
<div class="a" style="left:56px;top:630.0px;width:25px;height:15px;background:#36af97;border-radius:3.5px"></div>
<div class="t" style="left:88px;top:628.0px;font-size:15px;line-height:16px;color:#6b7a8c;">零售总金额</div>
<div class="a" style="left:175px;top:630.0px;width:25px;height:15px;background:#4a8fd0;border-radius:3.5px"></div>
<div class="t" style="left:207.5px;top:628.0px;font-size:15px;line-height:16px;color:#6b7a8c;">交易总金额</div>
<div class="a" style="left:295px;top:630.0px;width:25px;height:15px;background:#79c3fb;border-radius:3.5px"></div>
<div class="t" style="left:326.5px;top:628.0px;font-size:15px;line-height:16px;color:#6b7a8c;">销售金额</div>
<div class="a" style="left:51px;top:670px;width:7px;height:20px;background:#36af97;"></div>
<div class="a" style="left:579px;top:630.0px;width:25px;height:15px;background:#36af97;border-radius:3.5px"></div>
<div class="t" style="left:611px;top:628.0px;font-size:15px;line-height:16px;color:#6b7a8c;">零售总金额</div>
<div class="a" style="left:698.5px;top:630.0px;width:25px;height:15px;background:#79c3fb;border-radius:3.5px"></div>
<div class="t" style="left:731px;top:628.0px;font-size:15px;line-height:16px;color:#6b7a8c;">交易总金额</div>
<div class="a" style="left:457px;top:670px;width:11px;height:20px;background:#8fb0dc;"></div>
<div class="a" style="left:0px;top:0px;width:840px;height:1px;background:#f1f2f4;"></div>
<div class="a" style="left:24px;top:142px;width:394px;height:418px;background:transparent;border:1px solid #2b7de9;box-sizing:border-box"></div>
<div class="a" style="left:19.5px;top:138px;width:10px;height:10px;background:#1a7ef0;box-shadow:0 0 0 1px rgba(255,255,255,0.9)"></div>
<div class="a" style="left:19.5px;top:345.5px;width:10px;height:10px;background:#1a7ef0;box-shadow:0 0 0 1px rgba(255,255,255,0.9)"></div>
<div class="a" style="left:19.5px;top:554.5px;width:10px;height:10px;background:#1a7ef0;box-shadow:0 0 0 1px rgba(255,255,255,0.9)"></div>
<div class="a" style="left:215.5px;top:138px;width:10px;height:10px;background:#1a7ef0;box-shadow:0 0 0 1px rgba(255,255,255,0.9)"></div>
<div class="a" style="left:215.5px;top:554.5px;width:10px;height:10px;background:#1a7ef0;box-shadow:0 0 0 1px rgba(255,255,255,0.9)"></div>
<div class="a" style="left:412px;top:138px;width:10px;height:10px;background:#1a7ef0;box-shadow:0 0 0 1px rgba(255,255,255,0.9)"></div>
<div class="a" style="left:412px;top:345.5px;width:10px;height:10px;background:#1a7ef0;box-shadow:0 0 0 1px rgba(255,255,255,0.9)"></div>
<div class="a" style="left:412px;top:554.5px;width:10px;height:10px;background:#1a7ef0;box-shadow:0 0 0 1px rgba(255,255,255,0.9)"></div>
<div class="a" style="left:328px;top:117px;width:90px;height:25px;background:rgba(149,149,149,0.79);border-radius:4px 4px 0 0"></div>
<svg style="position:absolute;left:336px;top:119px" width="24" height="20" viewBox="0 0 24 20"><g fill="none" stroke="#fff"><path d="M6 5.4H21" stroke-width="1.5"/><path d="M11 5.4V3.9H16V5.4" stroke-width="1.4"/><path d="M8.8 5.8V16.1H18.2V5.8" stroke-width="1.8"/><path d="M11.3 8V14M12.8 8V14M14.3 8V14M15.8 8V14" stroke-width="0.8"/></g></svg>
<svg style="position:absolute;left:384px;top:119px" width="20" height="20" viewBox="0 0 20 20"><g fill="none" stroke="#fff"><path d="M3 9.4H17" stroke-width="1.4"/><path d="M4.9 8.4C6 6.5 8 5.7 11.5 5.9" stroke-width="1.6"/><path d="M15.9 11.2C14.8 13 12.8 14.2 9.5 14.3" stroke-width="1.6"/></g><path d="M10 3.2L14.6 6.2L10.2 8.4Z" fill="#fff"/><path d="M11 10.9L6 14.2L11 16.8Z" fill="#fff"/></svg>
</div>
<div class="a" style="left:0px;top:82px;width:247px;height:1px;background:#d3d3d3;"></div>
<div class="a" style="left:254px;top:82px;width:264px;height:1px;background:#d3d3d3;"></div>
<div class="a" style="left:525px;top:82px;width:841px;height:1px;background:#d3d3d3;"></div>
</body></html>
